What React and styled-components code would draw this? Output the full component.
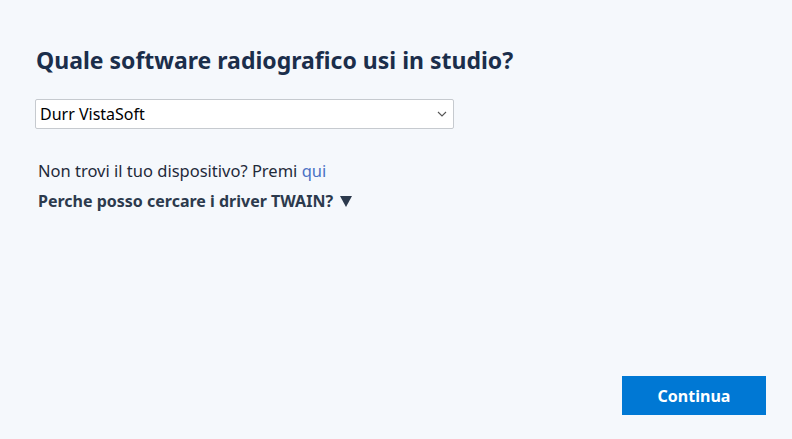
import styled, { createGlobalStyle } from "styled-components"

const GlobalStyle = createGlobalStyle`
    html, body {
        margin: 0;
        padding: 0;
        background-color: #f5f8fc;
    }
    body {
        font-family: "Noto Sans", "Open Sans", sans-serif;
    }
`

function Chevron() {
    return (
        <svg width="10" height="6" viewBox="0 0 10 6">
            <path d="M1 1 L5 5 L9 1" fill="none" stroke="#555" strokeWidth="1.1" />
        </svg>
    )
}

function Triangle() {
    return (
        <svg width="12" height="11" viewBox="0 0 12 11">
            <path d="M0 0 H12 L6 11 Z" fill="#2c3a4d" />
        </svg>
    )
}

export default function App() {
    return (
        <>
            <GlobalStyle />
            <Page>
                <Content>
                    <Title>Quale software radiografico usi in studio?</Title>
                    <Select>
                        <span>Durr VistaSoft</span>
                        <Chevron />
                    </Select>
                    <Hint>
                        Non trovi il tuo dispositivo? Premi <Link>qui</Link>
                    </Hint>
                    <Toggle>
                        Perche posso cercare i driver TWAIN?
                        <Triangle />
                    </Toggle>
                </Content>
                <Footer>
                    <Button>Continua</Button>
                </Footer>
            </Page>
        </>
    )
}

const Page = styled.div`
    width: 792px;
    height: 439px;
    box-sizing: border-box;
    padding: 45px 26px 24px 35px;

    display: flex;
    flex-direction: column;
    justify-content: space-between;
`

const Content = styled.div`
    display: flex;
    flex-direction: column;
    align-items: flex-start;
`

const Title = styled.h1`
    margin: 0 0 0 1px;
    font-size: 23px;
    font-weight: 700;
    line-height: 31px;
    color: #1b2e4b;
`

const Select = styled.div`
    width: 419px;
    height: 30px;
    margin-top: 23px;
    box-sizing: border-box;
    padding: 0 6px 0 4px;
    background-color: #ffffff;
    border: 1px solid #c6cacf;
    border-radius: 2px;

    display: flex;
    justify-content: space-between;
    align-items: center;

    font-size: 16px;
    color: #000000;
`

const Hint = styled.p`
    margin: 30px 0 0 3px;
    font-size: 16.5px;
    line-height: 24px;
    color: #1f2a3a;
`

const Link = styled.span`
    color: #4a72c4;
    cursor: pointer;
`

const Toggle = styled.p`
    margin: 6px 0 0 3px;
    font-size: 16px;
    font-weight: 700;
    line-height: 24px;
    color: #2c3a4d;
    cursor: pointer;

    display: flex;
    align-items: center;
    gap: 7px;
`

const Footer = styled.div`
    display: flex;
    justify-content: flex-end;
`

const Button = styled.button`
    width: 144px;
    height: 39px;
    background-color: #0078d4;
    border: none;
    color: #ffffff;
    font-family: inherit;
    font-size: 16px;
    font-weight: 700;
    cursor: pointer;
`
